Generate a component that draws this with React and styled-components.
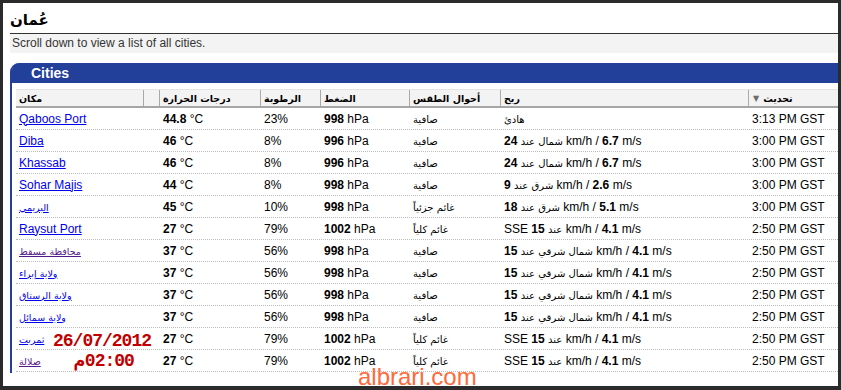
import React from 'react';
import styled, { createGlobalStyle } from 'styled-components';

const GlobalStyle = createGlobalStyle`
  html, body {
    margin: 0;
    padding: 0;
    background: #2b2b2b;
  }
  body {
    font-family: "Liberation Sans", "DejaVu Sans", Arial, sans-serif;
    font-size: 12px;
    color: #000;
  }
`;

const BLUE = '#223f99';
const COLS = '128px 16px 101px 60px 89px 91px 248px 120px';
const isArabic = s => /[\u0600-\u06FF]/.test(s);

const Frame = styled.div`
  position: relative;
  width: 835px;
  height: 383px;
  margin: 3px 3px 4px 3px;
  padding-left: 7px;
  box-sizing: border-box;
  background: #fff;
  overflow: hidden;
`;

const Title = styled.h1`
  margin: 0;
  height: 31px;
  box-sizing: border-box;
  padding-top: 7px;
  border-bottom: 1px solid #333;
  font: bold 15px "DejaVu Sans", sans-serif;
  line-height: 20px;
`;

const Notice = styled.div`
  height: 19px;
  line-height: 19px;
  padding-left: 2px;
  background: #f3f3f3;
  color: #333;
  font-size: 12px;
`;

const CitiesBox = styled.section`
  margin-top: 10px;
  margin-right: -40px;
  border-left: 2px solid ${BLUE};
  border-top-left-radius: 9px;
  padding-bottom: 1px;
`;

const BoxHeader = styled.h2`
  margin: 0;
  height: 20px;
  padding-left: 19px;
  background: ${BLUE};
  border-top-left-radius: 7px;
  color: #fff;
  font: bold 14px "Liberation Sans", Arial, sans-serif;
  line-height: 20px;
`;

const BoxBody = styled.div`
  padding: 6px 0 0 4px;
`;

const HeadRow = styled.div`
  display: grid;
  grid-template-columns: ${COLS};
  height: 19px;
  box-sizing: border-box;
  background: #f3f3f3;
  border-top: 1px solid #e4e4e4;
  border-bottom: 2px solid #a6a6a6;
`;

const HeadCell = styled.div`
  display: flex;
  align-items: center;
  gap: 4px;
  padding-left: ${p => p.$pad ?? 3}px;
  border-right: 1px solid #a9a9a9;
  font: bold 9.5px "DejaVu Sans", sans-serif;
  white-space: nowrap;
  overflow: hidden;
`;

const SortArrow = styled.span`
  color: #6d6d6d;
  font-size: 8px;
`;

const Row = styled.div`
  display: grid;
  grid-template-columns: ${COLS};
  height: 22px;
  box-sizing: border-box;
  border-bottom: 1px dotted #bdbdbd;
  align-items: center;
`;

const Cell = styled.div`
  padding-left: 3px;
  white-space: nowrap;
  overflow: hidden;
  font-size: 12px;
`;

const Ar = styled.span`
  font-family: "DejaVu Sans", sans-serif;
  font-size: ${p => p.$size || 10}px;
`;

const CityLink = styled.a`
  color: ${p => (p.$visited ? '#551a8b' : '#0000ee')};
  text-decoration: underline;
  font-family: ${p => (p.$ar ? '"DejaVu Sans", sans-serif' : '"Liberation Sans", Arial, sans-serif')};
  font-size: ${p => (p.$ar ? 9.5 : 12)}px;
`;

const Stamp = styled.div`
  position: absolute;
  left: ${p => p.$left}px;
  top: ${p => p.$top}px;
  display: flex;
  align-items: baseline;
  color: #c00000;
  font: bold 18px "Liberation Mono", "DejaVu Sans Mono", monospace;
  line-height: 18px;
  letter-spacing: -1px;
`;

const Watermark = styled.div`
  position: absolute;
  left: 355px;
  top: 362px;
  color: #ff6a3a;
  font: 24px "Liberation Sans", Arial, sans-serif;
  line-height: 24px;
`;

const cities = [
  { name: 'Qaboos Port', temp: '44.8', hum: '23%', pres: '998', cond: 'صافية', calm: true, time: '3:13 PM GST' },
  { name: 'Diba', temp: '46', hum: '8%', pres: '996', cond: 'صافية', dir: 'شمال', kmh: '24', ms: '6.7', time: '3:00 PM GST' },
  { name: 'Khassab', temp: '46', hum: '8%', pres: '996', cond: 'صافية', dir: 'شمال', kmh: '24', ms: '6.7', time: '3:00 PM GST' },
  { name: 'Sohar Majis', temp: '44', hum: '8%', pres: '998', cond: 'صافية', dir: 'شرق', kmh: '9', ms: '2.6', time: '3:00 PM GST' },
  { name: 'البريمي', temp: '45', hum: '10%', pres: '998', cond: 'غائم جزئياً', dir: 'شرق', kmh: '18', ms: '5.1', time: '3:00 PM GST' },
  { name: 'Raysut Port', temp: '27', hum: '79%', pres: '1002', cond: 'غائم كلياً', dir: 'SSE', kmh: '15', ms: '4.1', time: '2:50 PM GST' },
  { name: 'محافظة مسقط', visited: true, temp: '37', hum: '56%', pres: '998', cond: 'صافية', dir: 'شمال شرقي', kmh: '15', ms: '4.1', time: '2:50 PM GST' },
  { name: 'ولاية إبراء', temp: '37', hum: '56%', pres: '998', cond: 'صافية', dir: 'شمال شرقي', kmh: '15', ms: '4.1', time: '2:50 PM GST' },
  { name: 'ولاية الرستاق', temp: '37', hum: '56%', pres: '998', cond: 'صافية', dir: 'شمال شرقي', kmh: '15', ms: '4.1', time: '2:50 PM GST' },
  { name: 'ولاية سمائل', temp: '37', hum: '56%', pres: '998', cond: 'صافية', dir: 'شمال شرقي', kmh: '15', ms: '4.1', time: '2:50 PM GST' },
  { name: 'ثمريت', temp: '27', hum: '79%', pres: '1002', cond: 'غائم كلياً', dir: 'SSE', kmh: '15', ms: '4.1', time: '2:50 PM GST' },
  { name: 'صلالة', visited: true, temp: '27', hum: '79%', pres: '1002', cond: 'غائم كلياً', dir: 'SSE', kmh: '15', ms: '4.1', time: '2:50 PM GST' },
];

function Wind({ c }) {
  if (c.calm) return <Ar>هادئ</Ar>;
  return (
    <>
      {isArabic(c.dir) ? <Ar>{c.dir}</Ar> : c.dir} <Ar>عند</Ar> <b>{c.kmh}</b> km/h / <b>{c.ms}</b> m/s
    </>
  );
}

export default function App() {
  return (
    <>
      <GlobalStyle />
      <Frame>
        <Title>عُمان</Title>
        <Notice>Scroll down to view a list of all cities.</Notice>
        <CitiesBox>
          <BoxHeader>Cities</BoxHeader>
          <BoxBody>
            <HeadRow>
              <HeadCell>مكان</HeadCell>
              <HeadCell />
              <HeadCell>درجات الحرارة</HeadCell>
              <HeadCell>الرطوبة</HeadCell>
              <HeadCell>الضغط</HeadCell>
              <HeadCell>أحوال الطقس</HeadCell>
              <HeadCell>ريح</HeadCell>
              <HeadCell $pad={4}>
                <SortArrow>▼</SortArrow>
                تحديث
              </HeadCell>
            </HeadRow>
            {cities.map(c => (
              <Row key={c.name}>
                <Cell>
                  <CityLink href="#" $ar={isArabic(c.name)} $visited={c.visited}>
                    {c.name}
                  </CityLink>
                </Cell>
                <Cell />
                <Cell>
                  <b>{c.temp}</b> °C
                </Cell>
                <Cell>{c.hum}</Cell>
                <Cell>
                  <b>{c.pres}</b> hPa
                </Cell>
                <Cell>
                  <Ar>{c.cond}</Ar>
                </Cell>
                <Cell>
                  <Wind c={c} />
                </Cell>
                <Cell>{c.time}</Cell>
              </Row>
            ))}
          </BoxBody>
        </CitiesBox>
        <Stamp $left={50} $top={329}>26/07/2012</Stamp>
        <Stamp $left={71} $top={349}>
          <span>م</span>
          <span>02:00</span>
        </Stamp>
        <Watermark>albrari.com</Watermark>
      </Frame>
    </>
  );
}
